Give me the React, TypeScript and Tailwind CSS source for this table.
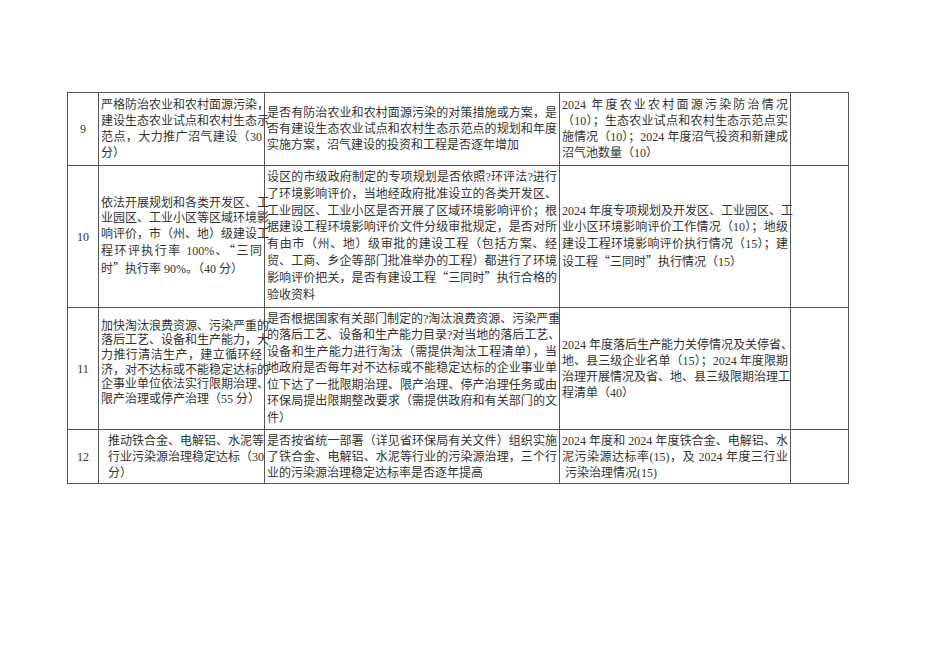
type Cell = { lines: string[]; cls: string };
type Row = { no: string; h: string; cells: Cell[] };

const rows: Row[] = [
  {
    no: "9",
    h: "h-[73px]",
    cells: [
      {
        cls: "px-[2px] leading-[16px]",
        lines: [
          "严格防治农业和农村面源污染，",
          "建设生态农业试点和农村生态示",
          "范点，大力推广沼气建设（30",
          "分）",
        ],
      },
      {
        cls: "px-[2px] leading-[16px]",
        lines: [
          "是否有防治农业和农村面源污染的对策措施或方案，是",
          "否有建设生态农业试点和农村生态示范点的规划和年度",
          "实施方案，沼气建设的投资和工程是否逐年增加",
        ],
      },
      {
        cls: "px-[2px] leading-[16px]",
        lines: [
          "2024 年度农业农村面源污染防治情况",
          "（10）；生态农业试点和农村生态示范点实",
          "施情况（10）；2024 年度沼气投资和新建成",
          "沼气池数量（10）",
        ],
      },
    ],
  },
  {
    no: "10",
    h: "h-[142px]",
    cells: [
      {
        cls: "px-[2px] leading-[15.5px]",
        lines: [
          "依法开展规划和各类开发区、工",
          "业园区、工业小区等区域环境影",
          "响评价，市（州、地）级建设工",
          "程环评执行率 100%、“三同",
          "时”执行率 90%。（40 分）",
        ],
      },
      {
        cls: "px-[2px] leading-[16.7px]",
        lines: [
          "设区的市级政府制定的专项规划是否依照?环评法?进行",
          "了环境影响评价，当地经政府批准设立的各类开发区、",
          "工业园区、工业小区是否开展了区域环境影响评价；根",
          "据建设工程环境影响评价文件分级审批规定，是否对所",
          "有由市（州、地）级审批的建设工程（包括方案、经",
          "贸、工商、乡企等部门批准举办的工程）都进行了环境",
          "影响评价把关，是否有建设工程“三同时”执行合格的",
          "验收资料",
        ],
      },
      {
        cls: "px-[2px] leading-[16.7px]",
        lines: [
          "2024 年度专项规划及开发区、工业园区、工",
          "业小区环境影响评价工作情况（10）；地级",
          "建设工程环境影响评价执行情况（15）；建",
          "设工程“三同时”执行情况（15）",
        ],
      },
    ],
  },
  {
    no: "11",
    h: "h-[122px]",
    cells: [
      {
        cls: "px-[2px] pb-[12px] leading-[14.6px]",
        lines: [
          "加快淘汰浪费资源、污染严重的",
          "落后工艺、设备和生产能力，大",
          "力推行清洁生产，建立循环经",
          "济，对不达标或不能稳定达标的",
          "企事业单位依法实行限期治理、",
          "限产治理或停产治理（55 分）",
        ],
      },
      {
        cls: "px-[2px] leading-[16.4px]",
        lines: [
          "是否根据国家有关部门制定的?淘汰浪费资源、污染严重",
          "的落后工艺、设备和生产能力目录?对当地的落后工艺、",
          "设备和生产能力进行淘汰（需提供淘汰工程清单），当",
          "地政府是否每年对不达标或不能稳定达标的企业事业单",
          "位下达了一批限期治理、限产治理、停产治理任务或由",
          "环保局提出限期整改要求（需提供政府和有关部门的文",
          "件）",
        ],
      },
      {
        cls: "px-[2px] leading-[16px]",
        lines: [
          "2024 年度落后生产能力关停情况及关停省、",
          "地、县三级企业名单（15）；2024 年度限期",
          "治理开展情况及省、地、县三级限期治理工",
          "程清单（40）",
        ],
      },
    ],
  },
  {
    no: "12",
    h: "h-[54px]",
    cells: [
      {
        cls: "pl-[9px] pr-[2px] leading-[16px]",
        lines: ["推动铁合金、电解铝、水泥等", "行业污染源治理稳定达标（30", "分）"],
      },
      {
        cls: "px-[2px] leading-[16px]",
        lines: [
          "是否按省统一部署（详见省环保局有关文件）组织实施",
          "了铁合金、电解铝、水泥等行业的污染源治理，三个行",
          "业的污染源治理稳定达标率是否逐年提高",
        ],
      },
      {
        cls: "px-[2px] leading-[16px]",
        lines: [
          "2024 年度和 2024 年度铁合金、电解铝、水",
          "泥污染源达标率(15)，及 2024 年度三行业",
          " 污染治理情况(15)",
        ],
      },
    ],
  },
];

// curly quotes come out narrow in the serif face, the CJK face draws them full width
function Text({ line }: { line: string }) {
  return (
    <>
      {line.split(/([“”])/).map((part, i) =>
        part === "“" || part === "”" ? (
          <span key={i} className="font-['Noto_Sans_CJK_SC',sans-serif]">
            {part}
          </span>
        ) : (
          part
        )
      )}
    </>
  );
}

function Lines({ cell }: { cell: Cell }) {
  return (
    <div className={cell.cls}>
      {cell.lines.map((line, i) =>
        i < cell.lines.length - 1 ? (
          <div key={i} className="w-max min-w-full text-justify [text-align-last:justify]">
            <Text line={line} />
          </div>
        ) : (
          <div key={i} className="whitespace-pre">
            <Text line={line} />
          </div>
        )
      )}
    </div>
  );
}

export default function App() {
  return (
    <div className="w-[950px] h-[672px] bg-white pt-[92px] pl-[67px] font-['Liberation_Serif','Noto_Sans_CJK_SC',serif] text-[12px] text-[#333]">
      <table className="table-fixed border-collapse w-[781px]">
        <colgroup>
          <col className="w-[31px]" />
          <col className="w-[166px]" />
          <col className="w-[295px]" />
          <col className="w-[231px]" />
          <col className="w-[58px]" />
        </colgroup>
        <tbody>
          {rows.map((row) => (
            <tr key={row.no}>
              <td className={`${row.h} border border-[#555] p-0 text-center align-middle`}>{row.no}</td>
              {row.cells.map((cell, i) => (
                <td key={i} className="border border-[#555] p-0 align-middle">
                  <Lines cell={cell} />
                </td>
              ))}
              <td className="border border-[#555] p-0"></td>
            </tr>
          ))}
        </tbody>
      </table>
    </div>
  );
}
